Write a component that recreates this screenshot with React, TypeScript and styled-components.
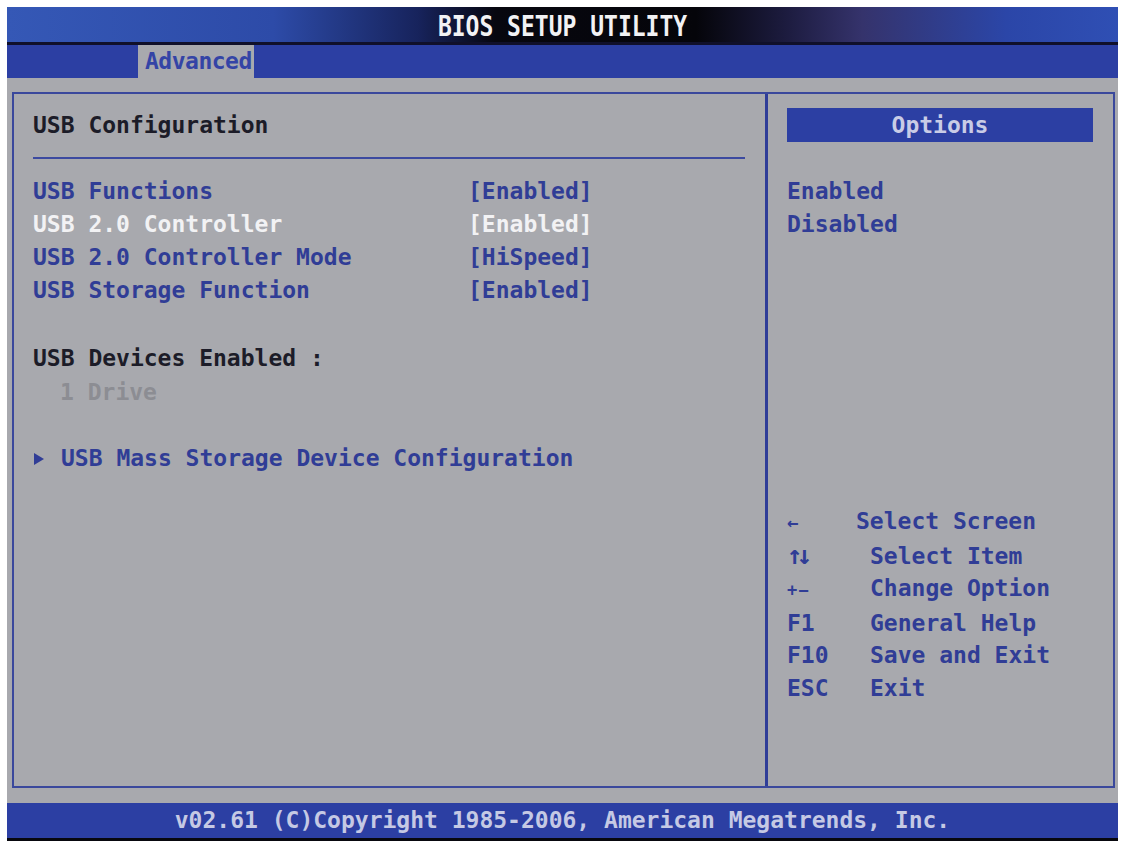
import React from "react";
import styled, { createGlobalStyle } from "styled-components";

// BIOS palette
const BLUE = "#2c3fa3";
const TEXT_BLUE = "#303d96";
const GRAY = "#a8a9ae";

const GlobalStyle = createGlobalStyle`
  html, body {
    margin: 0;
    padding: 0;
    background: #ffffff;
  }
  body {
    font-family: "DejaVu Sans Mono", "Liberation Mono", monospace;
    font-size: 23px;
    font-weight: bold;
  }
`;

const Screen = styled.div`
  margin: 7px 3px 0 7px;
  height: 834px;
  display: flex;
  flex-direction: column;
  background: ${GRAY};
`;

const TitleBar = styled.div`
  height: 35px;
  line-height: 35px;
  padding-top: 2px;
  box-sizing: border-box;
  text-align: center;
  color: #f2f2f4;
  background: linear-gradient(
    90deg,
    #3558b6 0%,
    #2d4ba8 24%,
    #17235c 37%,
    #07070f 44%,
    #05050a 62%,
    #1c1b3e 70%,
    #35336c 77%,
    #2b46a8 90%,
    #2f4fb4 100%
  );
`;

const Title = styled.span`
  display: inline-block;
  transform: scaleY(1.25);
`;

const TabBar = styled.div`
  height: 33px;
  border-top: 3px solid #10102a;
  background: ${BLUE};
  display: flex;
`;

const Tab = styled.div<{ $active?: boolean }>`
  margin-left: 131px;
  padding: 0 2px 0 7px;
  line-height: 33px;
  letter-spacing: -0.5px;
  color: ${(p) => (p.$active ? "#3444a6" : "#c8cbe6")};
  background: ${(p) => (p.$active ? GRAY : "transparent")};
`;

const Body = styled.div`
  flex: 1;
  display: flex;
  padding: 14px 3px 15px 5px;
`;

const Frame = styled.div`
  flex: 1;
  display: grid;
  grid-template-columns: 751px 1fr;
  border: 2px solid #3a489c;
`;

const MainPanel = styled.div`
  padding: 15px 20px 0 19px;
  display: flex;
  flex-direction: column;
`;

const Heading = styled.div`
  line-height: 33px;
  color: #1c1c28;
`;

const Rule = styled.div`
  height: 2px;
  background: #3c4aa0;
  margin: 15px 0 16px;
`;

const SettingRow = styled.div<{ $active?: boolean }>`
  display: grid;
  grid-template-columns: 435px auto;
  line-height: 33px;
  color: ${(p) => (p.$active ? "#f2f2f4" : TEXT_BLUE)};
`;

const InfoLine = styled.div<{ $muted?: boolean; $gap: number; $indent?: number }>`
  line-height: 33px;
  margin-top: ${(p) => p.$gap}px;
  padding-left: ${(p) => p.$indent ?? 0}px;
  color: ${(p) => (p.$muted ? "#8c8d93" : "#1c1c28")};
  white-space: pre;
`;

const SubMenu = styled.div`
  margin-top: 33px;
  line-height: 33px;
  color: ${TEXT_BLUE};
  display: flex;
  align-items: center;
`;

const Arrow = styled.span`
  width: 0;
  height: 0;
  border-top: 6px solid transparent;
  border-bottom: 6px solid transparent;
  border-left: 10px solid ${TEXT_BLUE};
  margin: 0 17px 0 1px;
`;

const SidePanel = styled.div`
  border-left: 3px solid #2f3d98;
  padding: 14px 20px 82px 19px;
  display: flex;
  flex-direction: column;
`;

const OptionsHeader = styled.div`
  height: 34px;
  line-height: 34px;
  text-align: center;
  background: ${BLUE};
  color: #c9cce6;
`;

const OptionList = styled.div`
  margin-top: 33px;
  color: ${TEXT_BLUE};
  line-height: 33px;
`;

const HelpList = styled.div`
  margin-top: auto;
  color: ${TEXT_BLUE};
`;

const HelpRow = styled.div`
  display: grid;
  grid-template-columns: 83px auto;
  align-items: baseline;
  line-height: 32.5px;
`;

const HelpKey = styled.span<{ $size?: number; $spacing?: number }>`
  font-size: ${(p) => p.$size ?? 23}px;
  letter-spacing: ${(p) => p.$spacing ?? 0}px;
`;

const HelpText = styled.span<{ $shift?: number }>`
  margin-left: ${(p) => -(p.$shift ?? 0)}px;
`;

const Footer = styled.div`
  height: 35px;
  line-height: 35px;
  border-bottom: 3px solid #08080e;
  background: ${BLUE};
  color: #c5c9e4;
  text-align: center;
  white-space: pre;
`;

const settings = [
  { label: "USB Functions", value: "[Enabled]" },
  { label: "USB 2.0 Controller", value: "[Enabled]", active: true },
  { label: "USB 2.0 Controller Mode", value: "[HiSpeed]" },
  { label: "USB Storage Function", value: "[Enabled]" },
];

const help = [
  { key: "\u2190", text: "Select Screen", size: 19, shift: 14 },
  { key: "\u2191\u2193", text: "Select Item", size: 26, spacing: -6 },
  { key: "+\u2212", text: "Change Option", size: 17, spacing: 1 },
  { key: "F1", text: "General Help" },
  { key: "F10", text: "Save and Exit" },
  { key: "ESC", text: "Exit" },
];

const App: React.FC = () => {
  return (
    <>
      <GlobalStyle />
      <Screen>
        <TitleBar>
          <Title>BIOS SETUP UTILITY</Title>
        </TitleBar>
        <TabBar>
          <Tab $active>Advanced</Tab>
        </TabBar>
        <Body>
          <Frame>
            <MainPanel>
              <Heading>USB Configuration</Heading>
              <Rule />
              {settings.map((s) => (
                <SettingRow key={s.label} $active={s.active}>
                  <span>{s.label}</span>
                  <span>{s.value}</span>
                </SettingRow>
              ))}
              <InfoLine $gap={35}>USB Devices Enabled :</InfoLine>
              <InfoLine $gap={1} $indent={27} $muted>
                1 Drive
              </InfoLine>
              <SubMenu>
                <Arrow />
                USB Mass Storage Device Configuration
              </SubMenu>
            </MainPanel>
            <SidePanel>
              <OptionsHeader>Options</OptionsHeader>
              <OptionList>
                <div>Enabled</div>
                <div>Disabled</div>
              </OptionList>
              <HelpList>
                {help.map((h) => (
                  <HelpRow key={h.text}>
                    <HelpKey $size={h.size} $spacing={h.spacing}>
                      {h.key}
                    </HelpKey>
                    <HelpText $shift={h.shift}>{h.text}</HelpText>
                  </HelpRow>
                ))}
              </HelpList>
            </SidePanel>
          </Frame>
        </Body>
        <Footer>v02.61 (C)Copyright 1985-2006, American Megatrends, Inc.</Footer>
      </Screen>
    </>
  );
};

export default App;
